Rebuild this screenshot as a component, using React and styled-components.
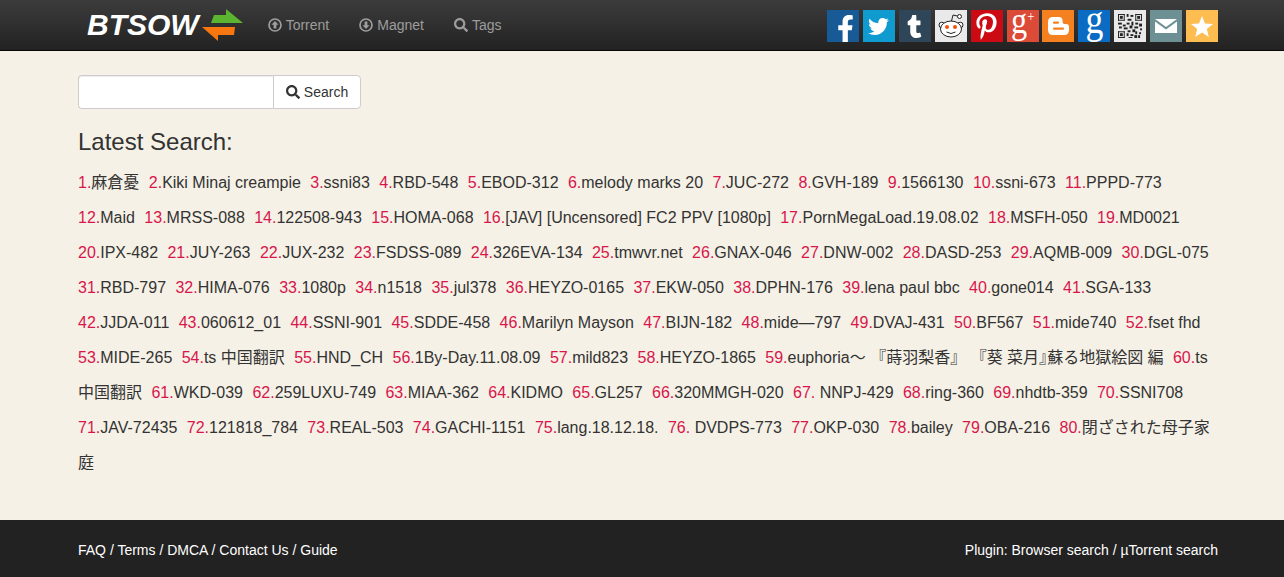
import React from 'react';
import styled, { createGlobalStyle } from 'styled-components';
import { FaSearch, FaFacebookF, FaTwitter, FaTumblr, FaPinterestP } from 'react-icons/fa';

const GlobalStyle = createGlobalStyle`
  html, body {
    margin: 0;
    padding: 0;
    background: #f5f1e6;
  }
  body {
    font-family: "Liberation Sans", Arial, "Noto Sans CJK JP", sans-serif;
    font-size: 14px;
    color: #333;
  }
`;

const Page = styled.div`
  display: flex;
  flex-direction: column;
  min-height: 577px;
`;

const Navbar = styled.header`
  height: 50px;
  flex-shrink: 0;
  background: linear-gradient(to bottom, #3c3c3c 0%, #222 100%);
  border-bottom: 1px solid #080808;
  display: flex;
  align-items: flex-start;
  padding: 0 66px 0 78px;
`;

const Logo = styled.a`
  display: flex;
  align-items: flex-start;
  margin-left: 9px;
  margin-right: 10px;
  color: #fff;
  font-size: 30px;
  font-weight: bold;
  font-style: italic;
  line-height: 50px;
  text-decoration: none;
  svg {
    margin: 9px 0 0 3px;
  }
`;

const NavLink = styled.a`
  display: flex;
  align-items: center;
  gap: 4px;
  height: 50px;
  padding: 0 15px;
  color: #9d9d9d;
  font-size: 14px;
  text-decoration: none;
`;

const Social = styled.div`
  margin-left: auto;
  display: flex;
  gap: 3.9px;
  padding-top: 10px;
`;

const Tile = styled.a`
  width: 32px;
  height: 32px;
  display: flex;
  align-items: ${(p) => (p.$end ? 'flex-end' : 'center')};
  justify-content: center;
  overflow: ${(p) => (p.$end ? 'hidden' : 'visible')};
  padding-left: ${(p) => (p.$end ? 4 : 0)}px;
  box-sizing: border-box;
  background: ${(p) => p.$bg};
  color: #fff;
  font-size: ${(p) => p.$size || 22}px;
  text-decoration: none;
`;

const SerifMark = styled.span`
  display: block;
  height: 32px;
  font-family: "Liberation Serif", serif;
  font-size: ${(p) => p.$size}px;
  line-height: 32px;
  transform: translateY(${(p) => p.$lift}px) scaleX(0.85);
  sup {
    font-size: 15px;
    vertical-align: 12px;
    line-height: 0;
  }
`;

const Main = styled.main`
  flex: 1;
  padding: 24px 66px 0 78px;
`;

const SearchForm = styled.form`
  display: flex;
  width: 283px;
  height: 34px;
`;

const SearchInput = styled.input`
  flex: 1;
  min-width: 0;
  box-sizing: border-box;
  border: 1px solid #ccc;
  border-right: 0;
  border-radius: 4px 0 0 4px;
  background: #fff;
  box-shadow: inset 0 1px 1px rgba(0, 0, 0, 0.075);
  outline: none;
`;

const SearchButton = styled.button`
  width: 88px;
  display: flex;
  align-items: center;
  justify-content: center;
  gap: 4px;
  border: 1px solid #ccc;
  border-radius: 0 4px 4px 0;
  background: #fff;
  color: #333;
  font-family: inherit;
  font-size: 14px;
  padding: 0;
  svg {
    font-size: 14px;
  }
`;

const Heading = styled.h3`
  margin: 20px 0 10px;
  font-size: 24px;
  font-weight: 500;
  line-height: 26px;
  color: #333;
`;

const Keywords = styled.p`
  margin: 0;
  font-size: 16px;
  line-height: 35px;
`;

const Keyword = styled.a`
  color: #333;
  text-decoration: none;
  margin-right: 0.5px;
  span {
    color: #d8164c;
  }
`;

const NoBreak = styled.b`
  font-weight: normal;
  white-space: nowrap;
`;

const TightBracket = styled.b`
  font-weight: normal;
  margin-right: -8px;
`;

const Footer = styled.footer`
  height: 57px;
  box-sizing: border-box;
  padding: 2px 66px 0 78px;
  flex-shrink: 0;
  background: #222;
  color: #fff;
  display: flex;
  align-items: center;
  justify-content: space-between;
  font-size: 14px;
`;

const ArrowsMark = () => (
  <svg width="41" height="32" viewBox="0 0 41 32">
    <polygon points="12,6 24,6 24,0 41,14 9,14" fill="#5cb531" />
    <polygon points="0,18 33,18 32,26 16,26 16,32" fill="#f7760f" />
  </svg>
);

// glyphicon style ring with an arrow in it
const CircleArrow = ({ down }) => (
  <svg width="14" height="14" viewBox="0 0 14 14">
    <circle cx="7" cy="7" r="6" fill="none" stroke="currentColor" strokeWidth="1.7" />
    <path
      d={down ? 'M7 11 L3.4 7.2 H5.6 V3.5 H8.4 V7.2 H10.6 Z' : 'M7 3 L10.6 6.8 H8.4 V10.5 H5.6 V6.8 H3.4 Z'}
      fill="currentColor"
    />
  </svg>
);

const RedditMark = () => (
  <svg width="30" height="30" viewBox="0 0 30 30">
    <path d="M15.5 10 L17 4 L22 5.2" fill="none" stroke="#222" strokeWidth="1" />
    <circle cx="23.5" cy="5.5" r="2" fill="#fff" stroke="#222" strokeWidth="1" />
    <circle cx="5.8" cy="14" r="2.8" fill="#fff" stroke="#222" strokeWidth="1" />
    <circle cx="24.2" cy="14" r="2.8" fill="#fff" stroke="#222" strokeWidth="1" />
    <ellipse cx="15" cy="18" rx="10.5" ry="8" fill="#fff" stroke="#222" strokeWidth="1" />
    <circle cx="11" cy="16" r="2" fill="#f4500f" />
    <circle cx="19" cy="16" r="2" fill="#f4500f" />
    <path d="M10.5 21 Q15 24 19.5 21" fill="none" stroke="#222" strokeWidth="1" />
  </svg>
);

const BloggerMark = () => (
  <svg width="21" height="18" viewBox="0 0 21 18">
    <path
      d="M5 0 H11 Q14 0 14.5 3 L14.7 5.5 Q15 7 17 7 H18 Q21 7 21 10 V13 Q21 18 16 18 H5 Q0 18 0 13 V5 Q0 0 5 0 Z"
      fill="#fff"
    />
    <rect x="5" y="4.5" width="6" height="2.2" rx="1" fill="#f58020" />
    <rect x="5" y="10.5" width="11" height="2.2" rx="1" fill="#f58020" />
  </svg>
);

const MailMark = () => (
  <svg width="22" height="14" viewBox="0 0 22 14">
    <polygon points="0,0 22,0 11,8" fill="#fff" />
    <polygon points="0,2.4 11,10.4 22,2.4 22,14 0,14" fill="#fff" />
  </svg>
);

const StarMark = () => (
  <svg width="22" height="21" viewBox="0 0 22 21">
    <polygon points="11,0 14,7.6 22,8 15.8,13 17.8,21 11,16.6 4.2,21 6.2,13 0,8 8,7.6" fill="#fff" />
  </svg>
);

// modules of the small qr tile, [x, y, w, h] on a 25 grid
const qrCells = [
  [0, 0, 7, 1], [0, 6, 7, 1], [0, 0, 1, 7], [6, 0, 1, 7], [2, 2, 3, 3],
  [18, 0, 7, 1], [18, 6, 7, 1], [18, 0, 1, 7], [24, 0, 1, 7], [20, 2, 3, 3],
  [0, 18, 7, 1], [0, 24, 7, 1], [0, 18, 1, 7], [6, 18, 1, 7], [2, 20, 3, 3],
  [9, 0, 2, 3], [13, 1, 3, 2], [10, 5, 4, 2], [9, 9, 3, 2], [14, 8, 2, 4],
  [0, 9, 4, 2], [5, 11, 3, 2], [1, 13, 3, 2], [6, 14, 4, 2], [12, 12, 3, 3],
  [18, 9, 3, 2], [22, 10, 3, 3], [17, 13, 4, 2], [23, 15, 2, 2], [10, 17, 3, 2],
  [15, 16, 3, 3], [9, 20, 2, 3], [13, 21, 3, 2], [18, 18, 2, 3], [22, 19, 2, 2],
  [17, 22, 3, 3], [21, 22, 2, 3], [11, 24, 4, 1],
];

const QrMark = () => (
  <svg width="24" height="24" viewBox="0 0 25 25">
    {qrCells.map(([x, y, w, h], i) => (
      <rect key={i} x={x} y={y} width={w} height={h} fill="#222" />
    ))}
  </svg>
);

const tsWord = <>ts <NoBreak>中国翻訳</NoBreak></>;
const euphoriaWord = <>euphoria～ 『蒔羽梨香』 『葵 菜月<TightBracket>』</TightBracket>蘇る地獄絵図 編</>;

const keywords = [
  '麻倉憂', 'Kiki Minaj creampie', 'ssni83', 'RBD-548', 'EBOD-312', 'melody marks 20', 'JUC-272', 'GVH-189', '1566130', 'ssni-673',
  'PPPD-773', 'Maid', 'MRSS-088', '122508-943', 'HOMA-068', '[JAV] [Uncensored] FC2 PPV [1080p]', 'PornMegaLoad.19.08.02', 'MSFH-050', 'MD0021', 'IPX-482',
  'JUY-263', 'JUX-232', 'FSDSS-089', '326EVA-134', 'tmwvr.net', 'GNAX-046', 'DNW-002', 'DASD-253', 'AQMB-009', 'DGL-075',
  'RBD-797', 'HIMA-076', '1080p', 'n1518', 'jul378', 'HEYZO-0165', 'EKW-050', 'DPHN-176', 'lena paul bbc', 'gone014',
  'SGA-133', 'JJDA-011', '060612_01', 'SSNI-901', 'SDDE-458', 'Marilyn Mayson', 'BIJN-182', 'mide—797', 'DVAJ-431', 'BF567',
  'mide740', 'fset fhd', 'MIDE-265', tsWord, 'HND_CH', '1By-Day.11.08.09', 'mild823', 'HEYZO-1865', euphoriaWord, tsWord,
  'WKD-039', '259LUXU-749', 'MIAA-362', 'KIDMO', 'GL257', '320MMGH-020', ' NNPJ-429', 'ring-360', 'nhdtb-359', 'SSNI708',
  'JAV-72435', '121818_784', 'REAL-503', 'GACHI-1151', 'lang.18.12.18.', ' DVDPS-773', 'OKP-030', 'bailey', 'OBA-216', '閉ざされた母子家庭',
];

export default function App() {
  return (
    <Page>
      <GlobalStyle />
      <Navbar>
        <Logo href="#">
          BTSOW
          <ArrowsMark />
        </Logo>
        <NavLink href="#"><CircleArrow /> Torrent</NavLink>
        <NavLink href="#"><CircleArrow down /> Magnet</NavLink>
        <NavLink href="#"><FaSearch /> Tags</NavLink>
        <Social>
          <Tile href="#" $bg="#175a96" $end $size={27}><FaFacebookF /></Tile>
          <Tile href="#" $bg="#0f9ad0" $size={21}><FaTwitter /></Tile>
          <Tile href="#" $bg="#2f4659" $size={23}><FaTumblr /></Tile>
          <Tile href="#" $bg="#e9e9e9"><RedditMark /></Tile>
          <Tile href="#" $bg="#cc0a14" $size={27}><FaPinterestP /></Tile>
          <Tile href="#" $bg="#dc4a38"><SerifMark $size={38} $lift={-6}>g<sup>+</sup></SerifMark></Tile>
          <Tile href="#" $bg="#f58020"><BloggerMark /></Tile>
          <Tile href="#" $bg="#0a6bc2"><SerifMark $size={42} $lift={-7}>g</SerifMark></Tile>
          <Tile href="#" $bg="#e9e9e9"><QrMark /></Tile>
          <Tile href="#" $bg="#6d9094"><MailMark /></Tile>
          <Tile href="#" $bg="#fdbd50"><StarMark /></Tile>
        </Social>
      </Navbar>
      <Main>
        <SearchForm onSubmit={(e) => e.preventDefault()}>
          <SearchInput type="text" name="q" />
          <SearchButton type="submit"><FaSearch /> Search</SearchButton>
        </SearchForm>
        <Heading>Latest Search:</Heading>
        <Keywords>
          {keywords.map((word, i) => (
            <React.Fragment key={i}>
              <Keyword href="#"><span>{i + 1}.</span>{word}</Keyword>
              {'\u00a0 '}
            </React.Fragment>
          ))}
        </Keywords>
      </Main>
      <Footer>
        <div>FAQ / Terms / DMCA / Contact Us / Guide</div>
        <div>Plugin: Browser search / µTorrent search</div>
      </Footer>
    </Page>
  );
}
